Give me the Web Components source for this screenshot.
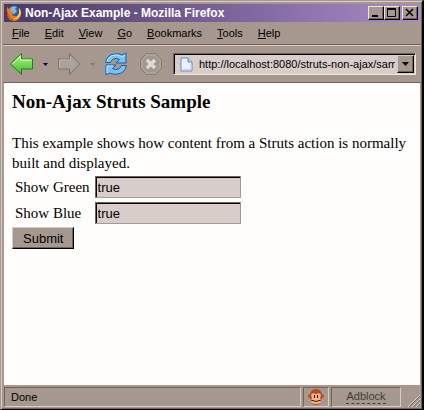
<!DOCTYPE html>
<html lang="en">
<head>
<meta charset="utf-8">
<meta name="viewport" content="width=device-width, initial-scale=1">
<title>Non-Ajax Example</title>
<style>
    html, body {
        margin: 0;
        height: 100%;
    }

    body {
        --face: #a6988f;
        --light: #d8cdc6;
        --shade: #6f625c;
        --field: #d8cec9;
        font-family: "Liberation Sans", Arial, sans-serif;
        font-size: 11px;
        color: #000;
    }
</style>
</head>
<body>
<browser-window>
    <title-bar slot="chrome">Non-Ajax Example - Mozilla Firefox</title-bar>
    <menu-bar slot="chrome" items="File,Edit,View,Go,Bookmarks,Tools,Help"></menu-bar>
    <nav-bar slot="chrome" url="http://localhost:8080/struts-non-ajax/sam"></nav-bar>
    <sample-page></sample-page>
    <status-bar slot="status">Done</status-bar>
</browser-window>

<script>
class BrowserWindow extends HTMLElement {
    constructor() {
        super();
        this.attachShadow({ mode: 'open' });
        this.shadowRoot.innerHTML = `
            <style>
                :host {
                    display: flex;
                    flex-direction: column;
                    box-sizing: border-box;
                    min-height: 100%;
                    padding: 2px 1px 1px 2px;
                    background: var(--face);
                    border: 1px solid #000;
                    border-width: 1px 2px 1px 1px;
                    border-top-color: var(--face);
                    border-left-color: var(--face);
                    box-shadow: inset 1px 1px var(--light), inset -1px -1px var(--shade);
                }

                main {
                    flex: 1;
                    margin: 0 1px;
                    background: #fffefd;
                }
            </style>
            <slot name="chrome"></slot>
            <main><slot></slot></main>
            <slot name="status"></slot>
        `;
    }
}

class TitleBar extends HTMLElement {
    constructor() {
        super();
        this.attachShadow({ mode: 'open' });
        this.shadowRoot.innerHTML = `
            <style>
                :host {
                    display: flex;
                    align-items: center;
                    height: 18px;
                    margin: 1px 1px 0;
                    padding: 0 2px;
                    background: linear-gradient(90deg, #493965, #7d649b 55%, #a98bc8);
                    color: #fff;
                    font-size: 12px;
                    font-weight: 700;
                    white-space: nowrap;
                }

                .title {
                    flex: 1;
                    margin-left: 3px;
                    overflow: hidden;
                }

                button {
                    display: block;
                    width: 16px;
                    height: 14px;
                    padding: 0;
                    background: var(--face);
                    border: 1px solid;
                    border-color: #eee5df #000 #000 #eee5df;
                    box-shadow: inset -1px -1px var(--shade);
                }

                button:last-child {
                    margin-left: 2px;
                }

                svg {
                    display: block;
                    flex: none;
                }
            </style>
            <svg width="16" height="16" viewBox="0 0 16 16">
                <circle cx="8" cy="8" r="7" fill="#2b5fae"/>
                <path d="M4 3q3-3 7-1l-2 2 2 2-3 3-4-1z" fill="#79c1e8"/>
                <path d="M1 2q1 2 3 2l2-1-1 3 3 2-2 1q1 3 5 2 3-2 2-8 3 3 2 7-2 6-7 6-7-1-7-8 0-3 0-6z" fill="#ee7b19"/>
                <path d="M13 3q3 4 1 8-3 4-7 3 6-2 6-6z" fill="#ffd34a"/>
                <path d="M1 6q0 6 6 9" stroke="#b63812" fill="none"/>
            </svg>
            <span class="title"><slot></slot></span>
            <button aria-label="Minimize"><svg width="14" height="12"><path d="M3 9h6" stroke="#000" stroke-width="2"/></svg></button>
            <button aria-label="Maximize"><svg width="14" height="12"><path d="M2.500 2v7.500h8V2" stroke="#000" fill="none"/><path d="M2 2h9" stroke="#000" stroke-width="2"/></svg></button>
            <button aria-label="Close"><svg width="14" height="12"><path d="M3 2l7 7M10 2l-7 7" stroke="#000" stroke-width="1.500"/></svg></button>
        `;
    }
}

class MenuBar extends HTMLElement {
    constructor() {
        super();
        this.attachShadow({ mode: 'open' });
    }

    connectedCallback() {
        const items = this.getAttribute('items').split(',');
        this.shadowRoot.innerHTML = `
            <style>
                :host {
                    display: block;
                    border-bottom: 1px solid var(--shade);
                }

                nav {
                    display: flex;
                    gap: 1px;
                    height: 22px;
                    align-items: center;
                    padding-left: 2px;
                }

                button {
                    padding: 0 7px;
                    border: 0;
                    background: none;
                    color: inherit;
                    font: inherit;
                    line-height: 16px;
                }

                u {
                    text-underline-offset: 1px;
                }
            </style>
            <nav>${items.map(item => `<button><u>${item[0]}</u>${item.slice(1)}</button>`).join('')}</nav>
        `;
    }
}

class NavBar extends HTMLElement {
    constructor() {
        super();
        this.attachShadow({ mode: 'open' });
    }

    connectedCallback() {
        this.shadowRoot.innerHTML = `
            <style>
                :host {
                    display: flex;
                    align-items: center;
                    height: 36px;
                    padding: 0 5px;
                    border-top: 1px solid var(--light);
                    border-bottom: 1px solid var(--shade);
                }

                svg {
                    display: block;
                    flex: none;
                }

                button {
                    flex: none;
                    padding: 0;
                    border: 0;
                    background: none;
                }

                .drop {
                    padding: 0 9px;
                }

                .stop {
                    margin: 0 10px 0 11px;
                }

                .address {
                    flex: 1;
                    display: flex;
                    align-items: center;
                    min-width: 0;
                    height: 20px;
                    padding-left: 6px;
                    background: var(--field);
                    border: 1px solid;
                    border-color: var(--shade) #eee5df #eee5df var(--shade);
                    box-shadow: inset 1px 1px #000;
                }

                input {
                    flex: 1;
                    min-width: 0;
                    margin: 0 2px 0 6px;
                    padding: 0;
                    border: 0;
                    background: none;
                    color: inherit;
                    font: inherit;
                }

                .history {
                    display: flex;
                    align-items: center;
                    justify-content: center;
                    box-sizing: border-box;
                    width: 17px;
                    height: 18px;
                    margin-right: 1px;
                    background: var(--face);
                    border: 1px solid;
                    border-color: var(--light) #000 #000 var(--light);
                    box-shadow: inset -1px -1px var(--shade);
                }
            </style>
            <button aria-label="Back">
                <svg width="26" height="24" viewBox="0 0 26 24">
                    <defs><linearGradient id="green" x2="0" y2="1"><stop stop-color="#b7f78b"/><stop offset="1" stop-color="#35bd2b"/></linearGradient></defs>
                    <path d="M2.500 12L13.500 1.500V7h11v10h-11v5.500z" fill="url(#green)" stroke="#237d20" stroke-linejoin="round"/>
                    <path d="M4.500 12L12.500 4v4h11" fill="none" stroke="#d5ffb8"/>
                </svg>
            </button>
            <button class="drop" aria-label="Back history"><svg width="5" height="3"><path d="M0 0h5L2.500 3z"/></svg></button>
            <button aria-label="Forward">
                <svg width="24" height="24" viewBox="0 0 24 24">
                    <path d="M22.500 12L12.500 1.500V7h-11v10h11v5.500z" fill="#aaa29d" stroke="#7e746f" stroke-linejoin="round"/>
                    <path d="M2.500 16V8h11V4" fill="none" stroke="#bdb4ae"/>
                </svg>
            </button>
            <button class="drop" aria-label="Forward history"><svg width="5" height="3"><path d="M0 0h5L2.500 3z" fill="#857972"/></svg></button>
            <button aria-label="Reload">
                <svg width="24" height="24" viewBox="0 0 24 24">
                    <g fill="#76c4f4" stroke="#1e5ba8" stroke-linejoin="round">
                        <path d="M1.500 10.500Q3 3 10 2q5-1 8 1l4-2v10H12l3.500-3.500q-3-2-6-.5-2 1-3 3.500z"/>
                        <path d="M22.500 13.500Q21 21 14 22q-5 1-8-1l-4 2V13h10l-3.500 3.500q3 2 6 .5 2-1 3-3.500z"/>
                    </g>
                    <path d="M3 9.500q2-6 8-6.500 4 0 7 2l3-2M3 21V14h6" fill="none" stroke="#b9e8ff"/>
                </svg>
            </button>
            <button class="stop" aria-label="Stop">
                <svg width="24" height="24" viewBox="0 0 24 24">
                    <path d="M7.500 1.500h9l6 6v9l-6 6h-9l-6-6v-9z" fill="#a19791" stroke="#847b76"/>
                    <path d="M8 3h8l5 5v8l-5 5H8l-5-5V8z" fill="none" stroke="#b6ada7"/>
                    <path d="M8 8l8 8M16 8l-8 8" stroke="#e0dad6" stroke-width="3.500"/>
                </svg>
            </button>
            <div class="address">
                <svg width="13" height="15" viewBox="0 0 13 15">
                    <path d="M1 1h7l4 4v9H1z" fill="#e8f2ff" stroke="#7088bb"/>
                    <path d="M8 1v4h4" fill="#b9cdf0" stroke="#7088bb"/>
                    <path d="M3 12.500h8V7" fill="none" stroke="#bfd3f3"/>
                </svg>
                <input type="text" aria-label="Address" value="${this.getAttribute('url')}">
                <button class="history" aria-label="Show history"><svg width="7" height="4"><path d="M0 0h7L3.500 4z"/></svg></button>
            </div>
        `;
    }
}

class SamplePage extends HTMLElement {
    constructor() {
        super();
        this.attachShadow({ mode: 'open' });
        this.shadowRoot.innerHTML = `
            <style>
                :host {
                    display: block;
                    padding: 8px;
                    font-family: "Liberation Serif", "Times New Roman", serif;
                    font-size: 15px;
                    line-height: 20px;
                }

                h1 {
                    margin: 0 0 20px;
                    font-size: 19px;
                    line-height: 22px;
                }

                p {
                    margin: 0;
                }

                .fields {
                    display: grid;
                    grid-template-columns: max-content 146px;
                    align-items: center;
                    gap: 4px 5px;
                    padding: 3px;
                }

                input, button {
                    box-sizing: border-box;
                    height: 22px;
                    font-family: "Liberation Sans", Arial, sans-serif;
                    font-size: 13px;
                    color: #000;
                    border-radius: 0;
                }

                input {
                    width: 100%;
                    padding: 0 2px;
                    background: var(--field);
                    border: 1px solid;
                    border-color: var(--shade) var(--face) var(--face) var(--shade);
                    box-shadow: inset 1px 1px #000;
                }

                button {
                    display: block;
                    padding: 0 10px;
                    background: var(--face);
                    border: 1px solid;
                    border-color: var(--light) #000 #000 var(--light);
                    box-shadow: inset -1px -1px var(--shade);
                }
            </style>
            <h1>Non-Ajax Struts Sample</h1>
            <p>This example shows how content from a Struts action is normally built and displayed.</p>
            <form>
                <div class="fields">
                    <label for="green">Show Green</label>
                    <input type="text" id="green" value="true">
                    <label for="blue">Show Blue</label>
                    <input type="text" id="blue" value="true">
                </div>
                <button type="button">Submit</button>
            </form>
        `;
    }
}

class StatusBar extends HTMLElement {
    constructor() {
        super();
        this.attachShadow({ mode: 'open' });
        this.shadowRoot.innerHTML = `
            <style>
                :host {
                    display: flex;
                    gap: 2px;
                    height: 20px;
                    margin: 2px 1px 1px;
                }

                .panel {
                    display: flex;
                    align-items: center;
                    justify-content: center;
                    box-sizing: border-box;
                    border: 1px solid;
                    border-color: var(--shade) var(--light) var(--light) var(--shade);
                }

                .text {
                    flex: 1;
                    justify-content: flex-start;
                    padding-left: 6px;
                }

                .monkey {
                    width: 26px;
                }

                .adblock {
                    width: 70px;
                }

                button {
                    padding: 0;
                    border: 0;
                    border-bottom: 1px dashed #443c38;
                    background: none;
                    color: #443c38;
                    font: inherit;
                    line-height: 13px;
                }

                .grip {
                    align-self: flex-end;
                    margin-left: 4px;
                }
            </style>
            <div class="panel text" role="status"><slot></slot></div>
            <div class="panel monkey">
                <svg width="16" height="16" viewBox="0 0 16 16">
                    <circle cx="2" cy="7" r="2" fill="#b75222"/>
                    <circle cx="14" cy="7" r="2" fill="#b75222"/>
                    <path d="M2 7q0-7 6-7t6 7v5q-2 4-6 4t-6-4z" fill="#b34b20"/>
                    <path d="M3 6q1-3 5-1 4-2 5 1l-1 3 2 2q-1 4-6 4t-6-4l2-2z" fill="#f4b48a"/>
                    <path d="M6.500 6v3M9.500 6v3" stroke="#301008"/>
                    <path d="M3 11q5 3 10 0" stroke="#301008" fill="none"/>
                </svg>
            </div>
            <div class="panel adblock"><button>Adblock</button></div>
            <svg class="grip" width="13" height="13">
                <path d="M1 13L13 1M5 13l8-8M9 13l4-4" stroke="#e2d8d1"/>
                <path d="M2 13L13 2M6 13l7-7M10 13l3-3" stroke="#6f625c"/>
            </svg>
        `;
    }
}

customElements.define('browser-window', BrowserWindow);
customElements.define('title-bar', TitleBar);
customElements.define('menu-bar', MenuBar);
customElements.define('nav-bar', NavBar);
customElements.define('sample-page', SamplePage);
customElements.define('status-bar', StatusBar);
</script>
</body>
</html>
